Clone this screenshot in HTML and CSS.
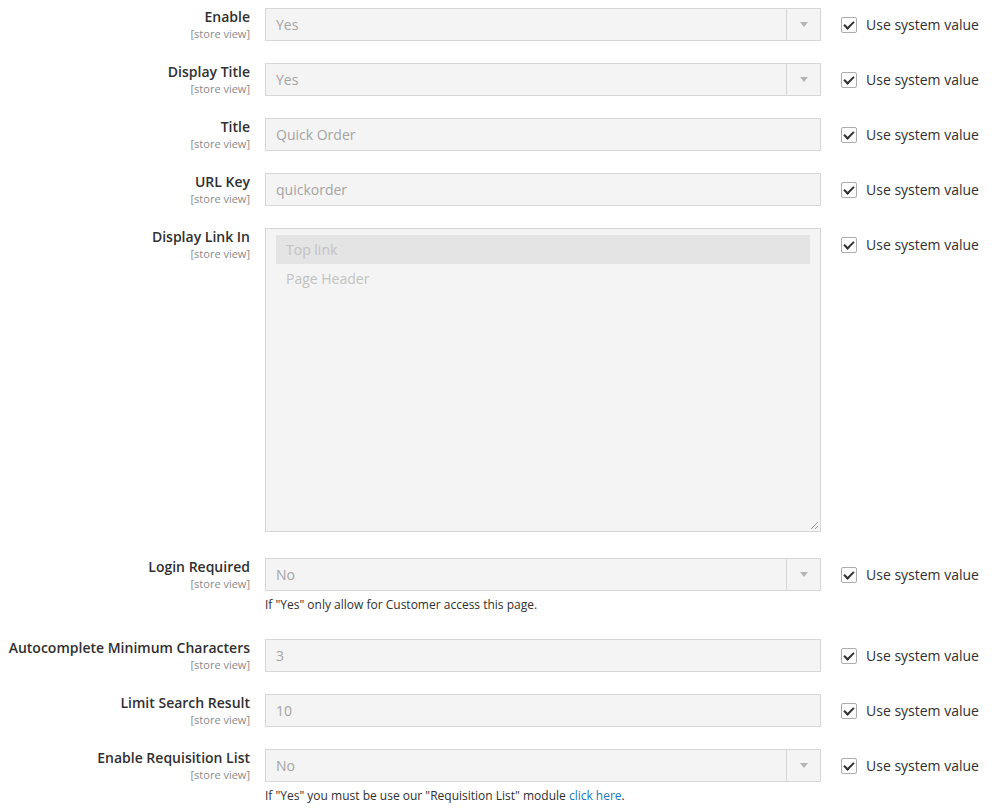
FILE: index.html
```html
<!DOCTYPE html>
<html>
<head>
<meta charset="utf-8">
<link rel="stylesheet" href="styles.css">
</head>
<body>
<div class="form">

  <div class="label"><span class="title">Enable</span><span class="scope">[store view]</span></div>
  <div class="value"><div class="control select"><span>Yes</span><span class="arrow"></span></div></div>
  <div class="inherit"><span class="check"></span>Use system value</div>

  <div class="label"><span class="title">Display Title</span><span class="scope">[store view]</span></div>
  <div class="value"><div class="control select"><span>Yes</span><span class="arrow"></span></div></div>
  <div class="inherit"><span class="check"></span>Use system value</div>

  <div class="label"><span class="title">Title</span><span class="scope">[store view]</span></div>
  <div class="value"><div class="control"><span>Quick Order</span></div></div>
  <div class="inherit"><span class="check"></span>Use system value</div>

  <div class="label"><span class="title">URL Key</span><span class="scope">[store view]</span></div>
  <div class="value"><div class="control"><span>quickorder</span></div></div>
  <div class="inherit"><span class="check"></span>Use system value</div>

  <div class="label"><span class="title">Display Link In</span><span class="scope">[store view]</span></div>
  <div class="value tall">
    <div class="multi">
      <div class="opt selected">Top link</div>
      <div class="opt">Page Header</div>
      <svg class="grip" width="10" height="10" viewBox="0 0 10 10"><path d="M2 9 L9 2 M6 9 L9 6" stroke="#9a9a9a" stroke-width="1" fill="none"/></svg>
    </div>
  </div>
  <div class="inherit"><span class="check"></span>Use system value</div>

  <div class="label"><span class="title">Login Required</span><span class="scope">[store view]</span></div>
  <div class="value"><div class="control select"><span>No</span><span class="arrow"></span></div>
    <p class="note">If "Yes" only allow for Customer access this page.</p></div>
  <div class="inherit"><span class="check"></span>Use system value</div>

  <div class="label"><span class="title">Autocomplete Minimum Characters</span><span class="scope">[store view]</span></div>
  <div class="value"><div class="control"><span>3</span></div></div>
  <div class="inherit"><span class="check"></span>Use system value</div>

  <div class="label"><span class="title">Limit Search Result</span><span class="scope">[store view]</span></div>
  <div class="value"><div class="control"><span>10</span></div></div>
  <div class="inherit"><span class="check"></span>Use system value</div>

  <div class="label"><span class="title">Enable Requisition List</span><span class="scope">[store view]</span></div>
  <div class="value"><div class="control select"><span>No</span><span class="arrow"></span></div>
    <p class="note">If "Yes" you must be use our "Requisition List" module <a href="#">click here</a>.</p></div>
  <div class="inherit"><span class="check"></span>Use system value</div>

</div>
</body>
</html>
```
FILE: styles.css
```css
html, body {
  margin: 0;
  padding: 0;
  background: #fff;
}
body {
  font-family: "Open Sans", "Liberation Sans", sans-serif;
  color: #303030;
}
.form {
  display: grid;
  grid-template-columns: 250px 556px auto;
  column-gap: 15px;
  row-gap: 22px;
  padding-top: 8px;
}
.label {
  display: flex;
  flex-direction: column;
  align-items: flex-end;
  text-align: right;
}
.title {
  font-size: 14px;
  font-weight: 600;
  line-height: 18px;
  color: #303030;
}
.scope {
  font-size: 11px;
  line-height: 15px;
  color: #8a8a8a;
}
.value.tall {
  padding-bottom: 4px;
}
.control {
  box-sizing: border-box;
  height: 33px;
  background: #f4f4f4;
  border: 1px solid #d6d6d6;
  display: flex;
  align-items: center;
  padding-left: 10px;
  font-size: 14px;
  color: #a4a4a4;
  position: relative;
}
.control.select span:first-child {
  flex: 1;
}
.arrow {
  width: 33px;
  height: 31px;
  border-left: 1px solid #d6d6d6;
  display: flex;
  align-items: center;
  justify-content: center;
}
.arrow::after {
  content: "";
  width: 0;
  height: 0;
  border-left: 4px solid transparent;
  border-right: 4px solid transparent;
  border-top: 5px solid #b4b4b4;
}
.multi {
  box-sizing: border-box;
  height: 304px;
  background: #f4f4f4;
  border: 1px solid #d6d6d6;
  padding: 6px 10px;
  position: relative;
}
.opt {
  height: 29px;
  line-height: 29px;
  padding-left: 10px;
  font-size: 14px;
  color: #c2c2c2;
}
.opt.selected {
  background: #e4e4e4;
}
.grip {
  position: absolute;
  right: 1px;
  bottom: 1px;
}
.note {
  margin: 5px 0 3px;
  font-size: 12px;
  line-height: 18px;
  color: #303030;
}
.note a {
  color: #1979c3;
  text-decoration: none;
}
.inherit {
  display: flex;
  align-items: center;
  height: 33px;
  padding-left: 5px;
  font-size: 14px;
  color: #303030;
}
.check {
  box-sizing: border-box;
  width: 16px;
  height: 16px;
  border: 1px solid #adadad;
  border-radius: 2px;
  background: #fff;
  margin-right: 9px;
  position: relative;
}
.check::after {
  content: "";
  position: absolute;
  left: 4px;
  top: 1px;
  width: 4px;
  height: 8px;
  border-right: 2px solid #303030;
  border-bottom: 2px solid #303030;
  transform: rotate(45deg);
}
```
